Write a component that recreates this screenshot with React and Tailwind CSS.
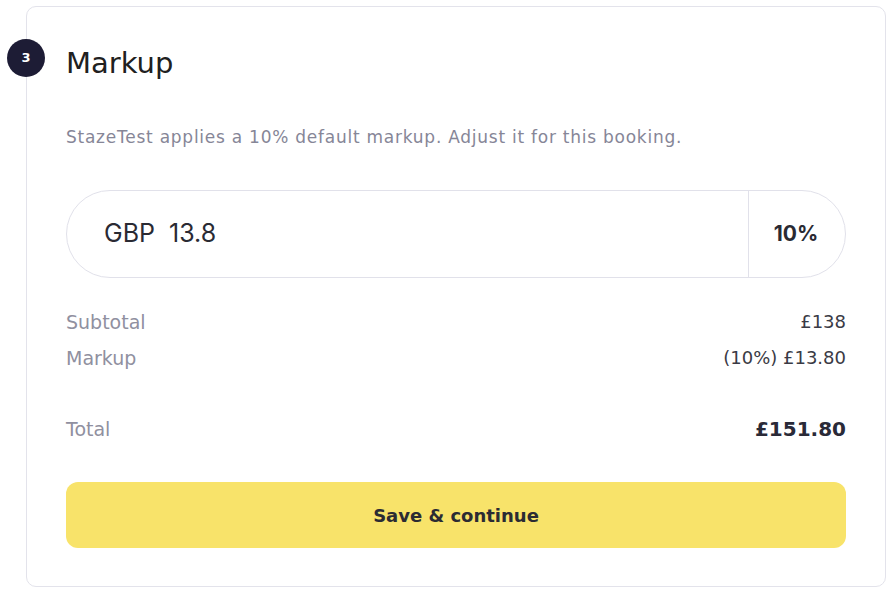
import React from "react";

const App = () => {
  return (
    <div className="w-[896px] h-[596px] bg-white pt-[6px] pl-[26px] font-['DejaVu_Sans',sans-serif]">
      <div className="relative w-[860px] h-[581px] rounded-[10px] border border-[#e3e3eb] bg-white px-[39px] pt-[36px]">
        {/* step badge */}
        <div className="absolute left-[-20px] top-[32px] flex h-[38px] w-[38px] items-center justify-center rounded-full bg-[#1d1c35] text-[13px] font-bold text-white">
          3
        </div>

        <h2 className="text-[29px] leading-[40px] text-[#202020]">Markup</h2>

        <p className="mt-[42px] text-[17px] leading-[24px] tracking-[0.75px] text-[#868697]">
          StazeTest applies a 10% default markup. Adjust it for this booking.
        </p>

        {/* markup input */}
        <div className="mt-[41px] flex h-[88px] items-stretch rounded-full border border-[#e1e1ea]">
          <div className="flex flex-1 items-center pl-[37px] font-['Inter',sans-serif] text-[25px] text-[#2a2a33]">
            GBP&nbsp;&nbsp;13.8
          </div>
          <div className="flex w-[97px] items-center justify-center border-l border-[#e1e1ea] pr-[2px] font-['Inter',sans-serif] text-[21px] font-bold text-[#2a2a33]">
            10%
          </div>
        </div>

        {/* summary */}
        <div className="mt-[31px] flex flex-col text-[19px] leading-[26px]">
          <div className="flex justify-between">
            <span className="text-[#9090a0]">Subtotal</span>
            <span className="text-[18px] text-[#3a3a45]">£138</span>
          </div>
          <div className="mt-[10px] flex justify-between">
            <span className="text-[#9090a0]">Markup</span>
            <span className="text-[18px] text-[#3a3a45]">(10%) £13.80</span>
          </div>
          <div className="mt-[45px] flex items-end justify-between">
            <span className="text-[#9090a0]">Total</span>
            <span className="text-[20px] font-bold text-[#2a2a38]">£151.80</span>
          </div>
        </div>

        <button className="mt-[40px] flex h-[66px] w-full items-center justify-center rounded-[12px] bg-[#f8e36a] text-[18px] font-bold text-[#2b2b33]">
          Save &amp; continue
        </button>
      </div>
    </div>
  );
};

export default App;
